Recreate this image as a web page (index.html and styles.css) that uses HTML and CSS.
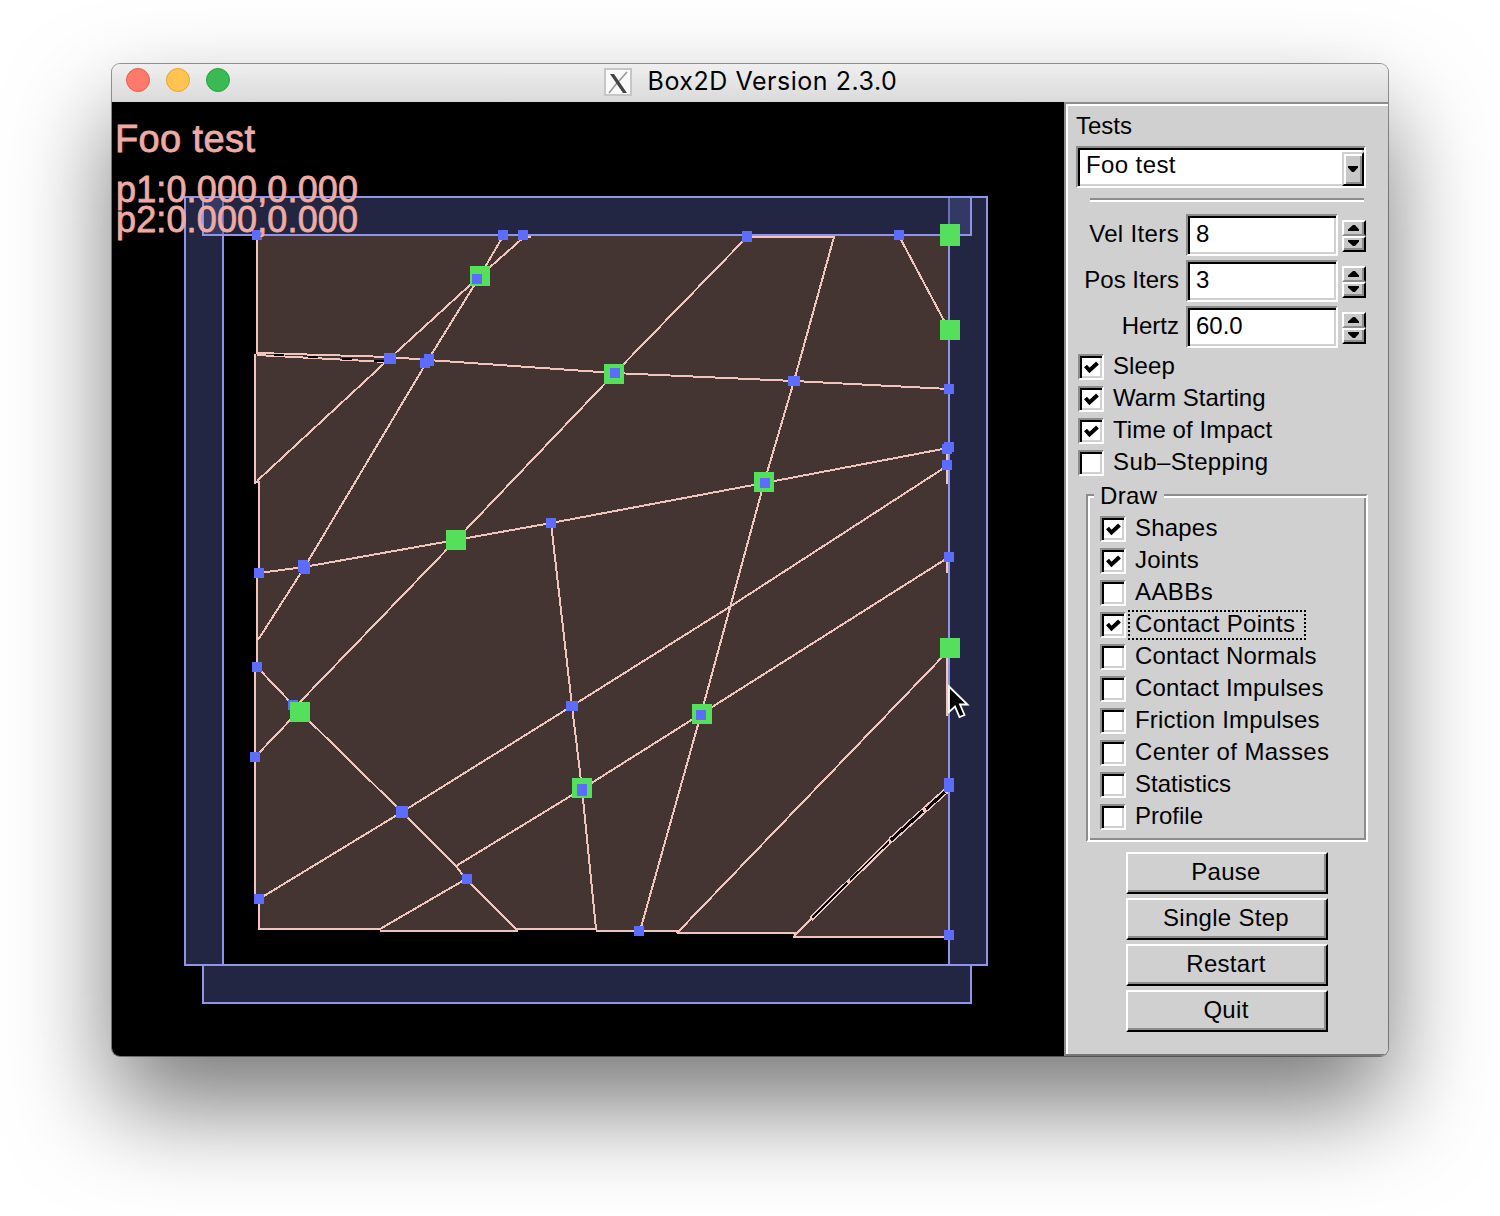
FILE: index.html
```html
<!DOCTYPE html>
<html lang="en">
<head>
<meta charset="utf-8">
<title>Box2D Version 2.3.0</title>
<link rel="stylesheet" href="styles.css">
</head>
<body>
<main class="window">
  <header class="titlebar">
    <div class="lights"><i class="light close"></i><i class="light minimize"></i><i class="light maximize"></i></div>
    <div class="title">
      <svg class="x11" width="28" height="28" viewBox="0 0 28 28"><rect x="1" y="1" width="26" height="26" fill="#fafafa" stroke="#c6c6c6" stroke-width="2"/><path d="M23 4L15 13M13 15L5 25" stroke="#999" stroke-width="1.6"/><path d="M6 6H10L23 25H19Z" fill="#444"/></svg>
      <h1>Box2D Version 2.3.0</h1>
    </div>
  </header>
  <div class="body">
    <svg class="scene" width="952" height="954" viewBox="112 102 952 954" shape-rendering="crispEdges">
      <rect x="112" y="102" width="952" height="954" fill="#000"/>
      <path class="fill" d="M257 235H949V937H793V933H677V931H597V929H517V931H380V929H259V899H255V667H257V573H259V481H255V354H257Z"/>
      <g class="edge">
        <path d="M257 236V354M255 354V484M255 482H259V573M257 573V667M255 667V898M259 899V929H381M380 931H518M517 929H597M596 931H678M677 933H796M793 937H949"/>
        <path d="M257 353L390 357L428 360L614 373L794 381L949 389M257 355L386 362"/>
        <path d="M257 481L390 358L480 276L524 237H531"/>
        <path d="M503 236L480 276L428 360L304 568L258 640"/>
        <path d="M834 237H747L614 374L456 540L298 704M296 714L255 757"/>
        <path d="M834 237L794 381L764 483L701 714L640 931"/>
        <path d="M899 236L949 330M551 523L572 706L582 789L596 929"/>
        <path d="M259 573L304 567L456 540L551 523L764 483L948 448"/>
        <path d="M947 466L731 606L572 706L402 812L259 899"/>
        <path d="M949 557L701 714L582 789L456 866"/>
        <path d="M257 667L294 706L402 812L456 866L466 879L517 930M466 879L380 929"/>
        <path d="M949 650L677 933"/>
        <path d="M812 918L794 936"/>
        <path class="crack" d="M947 790L891 840"/>
        <path class="crack narrow" d="M891 840L811 919"/>
      </g>
      <path class="gap" d="M274 355H284M308 357H318M342 359H352M374 361H384"/>
      <path class="gap wide" d="M945 792L926 809M923 811L891 840"/>
      <path class="gap thin" d="M889 842L850 880M847 883L812 918"/>
      <g class="wall">
        <rect x="185" y="197" width="38" height="768"/>
        <rect x="949" y="197" width="38" height="768"/>
        <rect x="203" y="197" width="768" height="38"/>
        <rect x="203" y="965" width="768" height="38"/>
      </g>
      <path class="edge" d="M747 237H835M947 453V484M947 560V573M947 657V716"/>
      <path class="contact" d="M470 266h20v20h-20zM604 364h20v20h-20zM940 224h20v22h-20zM940 320h20v20h-20zM754 472h20v20h-20zM446 530h20v20h-20zM692 704h20v20h-20zM572 778h20v20h-20zM940 638h20v20h-20z"/>
      <path class="point" d="M252 230h10v10h-10zM498 230h10v10h-10zM518 230h10v10h-10zM742 231h10v11h-10zM894 230h10v10h-10zM472 274h10v10h-10zM384 353h12v11h-12zM424 354h10v12h-4v2h-10v-10h4zM610 368h10v10h-10zM788 376h12v10h-12zM944 384h10v10h-10zM942 444h2v-2h10v10h-2v2h-10zM942 460h10v10h-10zM760 478h10v10h-10zM546 518h10v10h-10zM254 568h10v10h-10zM298 560h10v2h2v12h-10v-2h-2zM252 662h10v10h-10zM250 752h10v10h-10zM566 701h12v10h-12zM396 806h12v12h-12zM462 874h10v10h-10zM254 894h10v10h-10zM944 552h10v10h-10zM696 710h10v10h-10zM577 784h10v12h-10zM944 778h10v14h-10zM944 930h10v10h-10zM634 926h10v10h-10zM288 700h10v10h-10z"/>
      <path class="contact" d="M290 702h20v20h-20z"/>
      <g class="hud">
        <text class="heading" x="115" y="152" textLength="140">Foo test</text>
        <text x="116" y="202" textLength="242">p1:0.000,0.000</text>
        <text x="116" y="232" textLength="242">p2:0.000,0.000</text>
      </g>
      <path class="cursor" shape-rendering="auto" d="M949 686.500V712L955 706.500L959.500 717L964.500 715L960 704.500H967.500Z"/>
    </svg>
    <aside class="panel">
      <div class="heading-label">Tests</div>
      <div class="select"><span>Foo test</span><b class="drop"><svg width="10" height="6" viewBox="0 0 10 6"><path d="M0 0H10V1.500L6 6H4L0 1.500Z"/></svg></b></div>
      <div class="rule"></div>
      <div class="fields">
        <div class="field"><label class="loose">Vel Iters</label><div class="input">8</div><div class="spin"><b><svg width="12" height="6" viewBox="0 0 12 6"><path d="M5 0H7L11 4.500V6H0V4.500Z"/></svg></b><b><svg width="12" height="6" viewBox="0 0 12 6"><path d="M0 0H11V1.500L7 6H5L0 1.500Z"/></svg></b></div></div>
        <div class="field"><label>Pos Iters</label><div class="input">3</div><div class="spin"><b><svg width="12" height="6" viewBox="0 0 12 6"><path d="M5 0H7L11 4.500V6H0V4.500Z"/></svg></b><b><svg width="12" height="6" viewBox="0 0 12 6"><path d="M0 0H11V1.500L7 6H5L0 1.500Z"/></svg></b></div></div>
        <div class="field"><label>Hertz</label><div class="input">60.0</div><div class="spin"><b><svg width="12" height="6" viewBox="0 0 12 6"><path d="M5 0H7L11 4.500V6H0V4.500Z"/></svg></b><b><svg width="12" height="6" viewBox="0 0 12 6"><path d="M0 0H11V1.500L7 6H5L0 1.500Z"/></svg></b></div></div>
      </div>
      <div class="checks">
        <div class="check on"><i><svg width="16" height="16" viewBox="0 0 16 16"><path d="M1.500 5L5.500 9.500L13.500 2" /></svg></i><span>Sleep</span></div>
        <div class="check on"><i><svg width="16" height="16" viewBox="0 0 16 16"><path d="M1.500 5L5.500 9.500L13.500 2" /></svg></i><span class="tight">Warm Starting</span></div>
        <div class="check on"><i><svg width="16" height="16" viewBox="0 0 16 16"><path d="M1.500 5L5.500 9.500L13.500 2" /></svg></i><span>Time of Impact</span></div>
        <div class="check"><i></i><span class="loose">Sub&#8211;Stepping</span></div>
      </div>
      <section class="group">
        <h2>Draw</h2>
        <div class="check on"><i><svg width="16" height="16" viewBox="0 0 16 16"><path d="M1.500 5L5.500 9.500L13.500 2" /></svg></i><span>Shapes</span></div>
        <div class="check on"><i><svg width="16" height="16" viewBox="0 0 16 16"><path d="M1.500 5L5.500 9.500L13.500 2" /></svg></i><span>Joints</span></div>
        <div class="check"><i></i><span class="loose">AABBs</span></div>
        <div class="check on"><i><svg width="16" height="16" viewBox="0 0 16 16"><path d="M1.500 5L5.500 9.500L13.500 2" /></svg></i><span class="focused">Contact Points</span></div>
        <div class="check"><i></i><span>Contact Normals</span></div>
        <div class="check"><i></i><span>Contact Impulses</span></div>
        <div class="check"><i></i><span>Friction Impulses</span></div>
        <div class="check"><i></i><span class="loose">Center of Masses</span></div>
        <div class="check"><i></i><span class="tight">Statistics</span></div>
        <div class="check"><i></i><span class="tight">Profile</span></div>
      </section>
      <div class="buttons">
        <button>Pause</button><button>Single Step</button><button>Restart</button><button>Quit</button>
      </div>
    </aside>
  </div>
</main>
</body>
</html>
```

FILE: styles.css
```css
* { box-sizing: border-box; }
html, body { height: 100%; }
body { margin: 0; background: #fff; overflow: hidden; padding: 64px 112px 0; font-family: "Liberation Sans", Arial, sans-serif; }
.window { width: 1276px; height: 992px; border-radius: 8px; overflow: hidden; background: #d0d0d0;
  box-shadow: 0 0 0 1px rgba(0,0,0,.4), 0 50px 100px rgba(0,0,0,.53); }
.titlebar { height: 38px; position: relative; display: flex; justify-content: center; background: linear-gradient(#efefef, #dadada); }
.lights { position: absolute; left: 14px; top: 4px; display: flex; gap: 16px; }
.light { width: 24px; height: 24px; border-radius: 50%; border: 1.500px solid; }
.close { background: #ff7a6b; border-color: #ec5c50; }
.minimize { background: #ffc350; border-color: #e6a53a; }
.maximize { background: #3aba55; border-color: #2ba03e; }
.title { display: flex; height: 34px; align-items: center; gap: 16px; }
.x11 { margin-top: 1px; }
h1 { margin: 0; width: 249px; font: 400 25px/34px Inter, sans-serif; letter-spacing: .53px; white-space: nowrap; color: #000; }
.body { display: flex; height: 954px; }
.scene { display: block; flex: none; }
.fill { fill: #443533; }
.gap { fill: none; stroke: #000; stroke-width: 2; }
.gap.wide { stroke-width: 3; }
.gap.thin { stroke-width: 1.700; }
.edge { fill: none; stroke: #efc5bd; stroke-width: 2; }
.crack { stroke-width: 6; }
.crack.narrow { stroke-width: 4.800; }
.wall { fill: rgba(70,76,132,.5); stroke: #8f94e8; stroke-width: 2; }
.contact { fill: #55e05c; }
.point { fill: #5b6cff; }
.hud { fill: #edaba4; stroke: #edaba4; stroke-width: .8; font-size: 36px; }
.hud .heading { font-size: 38px; }
.cursor { fill: #000; stroke: #fff; stroke-width: 1.800; }

.panel { width: 324px; height: 954px; background: #d0d0d0; color: #000; font-size: 24px; border-top: 2px solid #8d8d8d; border-left: 2px solid #8d8d8d; border-bottom: 2px solid #777; box-shadow: inset 2px 2px #fff; padding: 2px 0 0 2px; }
.heading-label { height: 40px; line-height: 40px; margin-left: 8px; }
.select, .input, .check i { background: #fff; border: 2px solid; border-color: #8d8d8d #fff #fff #8d8d8d; box-shadow: inset 2px 2px #000, inset -2px -2px #d0d0d0; }
.select { width: 290px; height: 42px; margin-left: 8px; display: flex; justify-content: space-between; line-height: 34px; padding-left: 8px; letter-spacing: .4px; }
.drop { width: 22px; height: 34px; margin: 4px 0 0; background: #c8c8c8; border: 2px solid; border-color: #d0d0d0 #000 #000 #d0d0d0; box-shadow: inset 2px 2px #fff, inset -2px -2px #8d8d8d; display: flex; align-items: center; justify-content: center; }
.drop svg, .spin svg { display: block; flex: none; }
.rule { width: 274px; height: 4px; margin: 10px 0 0 22px; background: #fff; border-top: 2px solid #8d8d8d; }
.fields { margin-top: 12px; }
.field { display: flex; height: 46px; }
.field label { width: 111px; text-align: right; line-height: 40px; margin-right: 7px; }
.field .loose { letter-spacing: .35px; }
.input { width: 152px; height: 42px; line-height: 36px; padding-left: 8px; }
.spin { width: 24px; height: 32px; margin: 6px 0 0 4px; }
.spin b { height: 16px; display: flex; padding-left: 4px; align-items: center; background: #c8c8c8; border: 2px solid; border-color: #fff #000 #8d8d8d #fff; box-shadow: inset -2px 0 #8d8d8d; }
.spin b + b { border-bottom-color: #000; box-shadow: inset -2px -2px #8d8d8d; padding-bottom: 2px; }
.checks { margin: -1px 0 0 10px; }
.check { height: 32px; display: flex; align-items: center; letter-spacing: .2px; }
.checks .check { letter-spacing: .1px; }
.check i { width: 26px; height: 26px; flex: none; padding: 5px 0 0 4px; }
.check svg { display: block; fill: none; stroke: #000; stroke-width: 4; }
.check span { margin-left: 2px; height: 30px; line-height: 24px; border: 2px solid transparent; padding: 0 7px 0 5px; white-space: nowrap; }
.check .tight { letter-spacing: 0; }
.check .loose { letter-spacing: .4px; }
.check .focused { border: 2px dotted #000; letter-spacing: .3px; padding-right: 9px; }
.group { width: 282px; height: 348px; margin: 15px 0 0 18px; border: 2px solid; border-color: #8d8d8d #fff #fff #8d8d8d; box-shadow: inset 2px 2px #fff, inset -2px -2px #8d8d8d; padding-left: 12px; }
h2 { width: 70px; height: 32px; margin: -16px 0 1px -6px; padding-left: 6px; font: 400 24px/32px "Liberation Sans", Arial, sans-serif; letter-spacing: .4px; background: #d0d0d0; }
.buttons { display: flex; flex-direction: column; gap: 4px; margin: 10px 0 0 58px; width: 202px; }
button { height: 42px; padding: 0 4px 2px 2px; font: 24px/34px "Liberation Sans", Arial, sans-serif; letter-spacing: .3px; color: #000; background: #d0d0d0; border: 2px solid; border-color: #fff #000 #000 #fff; border-radius: 0; box-shadow: inset -2px -2px #8d8d8d; }
```
